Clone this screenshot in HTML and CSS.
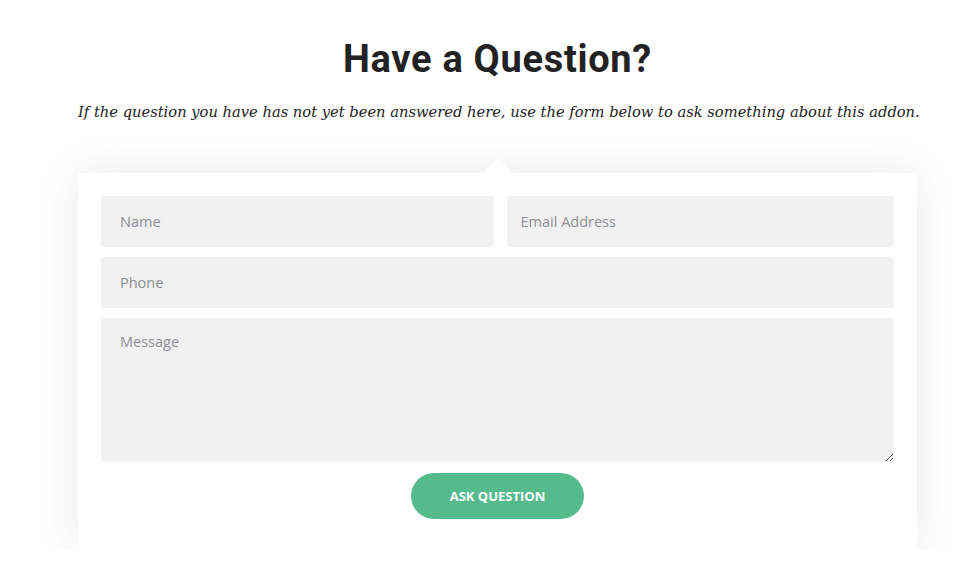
FILE: index.html
```html
<!DOCTYPE html>
<html>
<head>
<meta charset="utf-8">
<link rel="stylesheet" href="styles.css">
</head>
<body>
<section class="wrap">
  <h2 class="title">Have a Question?</h2>
  <p class="sub">If the question you have has not yet been answered here, use the form below to ask something about this addon.</p>
  <form class="card">
    <div class="row">
      <input class="field" type="text" placeholder="Name">
      <input class="field field-tight" type="email" placeholder="Email Address">
    </div>
    <input class="field" type="text" placeholder="Phone">
    <textarea class="field msg" placeholder="Message"></textarea>
    <div class="actions">
      <button class="btn" type="button">Ask Question</button>
    </div>
  </form>
</section>
</body>
</html>
```
FILE: styles.css
```css
html, body { margin: 0; padding: 0; background: #fff; }
body { font-family: "Open Sans", sans-serif; }
.wrap {
  width: 839px;
  margin-left: 78px;
  padding-top: 36px;
  display: flex;
  flex-direction: column;
  align-items: stretch;
}
.title {
  margin: 0;
  text-align: center;
  font-family: Roboto, "Liberation Sans", sans-serif;
  font-weight: 700;
  font-size: 38px;
  line-height: 46px;
  color: #222;
  letter-spacing: 0.7px;
}
.sub {
  margin: 16px 0 0;
  text-align: center;
  font-family: "DejaVu Serif", serif;
  font-style: italic;
  font-size: 14.7px;
  line-height: 28px;
  color: #222;
  white-space: nowrap;
}
.card {
  position: relative;
  margin-top: 47px;
  background: #fff;
  padding: 23px 23px 31px;
  display: flex;
  flex-direction: column;
  gap: 10px;
  box-shadow: 0 0 40px rgba(0,0,0,0.09);
}
.card::before {
  content: "";
  position: absolute;
  top: -15px;
  left: 50%;
  margin-left: -15px;
  border-left: 15px solid transparent;
  border-right: 15px solid transparent;
  border-bottom: 15px solid #fff;
}
.row { display: flex; gap: 13px; }
.row .field { flex: 1 1 0; min-width: 0; width: 0; }
.field {
  display: block;
  box-sizing: border-box;
  height: 51px;
  border: 0;
  border-radius: 3px;
  background: #f1f1f1;
  padding: 0 19px;
  font-family: "Open Sans", sans-serif;
  font-size: 14.5px;
  color: #333;
  outline: none;
}
.field-tight { padding-left: 14px; }
.field::placeholder { color: #8e8e96; }
.msg {
  height: 144px;
  padding-top: 14px;
  resize: vertical;
  margin: 0;
}
.actions { display: flex; justify-content: center; margin-top: 1px; }
.btn {
  width: 173px;
  height: 46px;
  border: 0;
  border-radius: 23px;
  background: #55bb8d;
  color: #fff;
  font-family: "Open Sans", sans-serif;
  font-weight: 700;
  font-size: 13px;
  text-transform: uppercase;
  cursor: pointer;
}
```
